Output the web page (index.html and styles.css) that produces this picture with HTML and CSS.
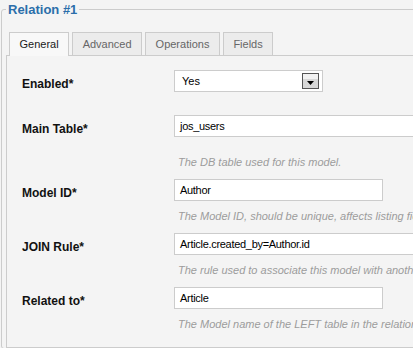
FILE: index.html
```html
<!DOCTYPE html>
<html>
<head>
<meta charset="utf-8">
<link rel="stylesheet" href="styles.css">
</head>
<body>
<fieldset class="relation">
  <legend class="relation-title">Relation #1</legend>
  <ul class="tabs">
    <li class="tab tab-active">General</li>
    <li class="tab">Advanced</li>
    <li class="tab">Operations</li>
    <li class="tab">Fields</li>
  </ul>
  <div class="panel">
    <div class="row row-first">
      <div class="label">Enabled*</div>
      <div class="field">
        <div class="select">
          <span class="select-value">Yes</span>
          <span class="select-btn">
            <svg width="7" height="4" viewBox="0 0 7 4"><path d="M0 0H7L3.5 4Z" fill="#000"/></svg>
          </span>
        </div>
      </div>
    </div>
    <div class="row row-main">
      <div class="label">Main Table*</div>
      <div class="field">
        <div class="input input-wide">jos_users</div>
        <div class="help help-main">The DB table used for this model.</div>
      </div>
    </div>
    <div class="row">
      <div class="label">Model ID*</div>
      <div class="field">
        <div class="input">Author</div>
        <div class="help">The Model ID, should be unique, affects listing fields and filters</div>
      </div>
    </div>
    <div class="row">
      <div class="label">JOIN Rule*</div>
      <div class="field">
        <div class="input input-wide">Article.created_by=Author.id</div>
        <div class="help">The rule used to associate this model with another one</div>
      </div>
    </div>
    <div class="row">
      <div class="label">Related to*</div>
      <div class="field">
        <div class="input">Article</div>
        <div class="help">The Model name of the LEFT table in the relation</div>
      </div>
    </div>
  </div>
</fieldset>
</body>
</html>
```
FILE: styles.css
```css
html, body {
  margin: 0;
  padding: 0;
  background: #f4f4f4;
  overflow: hidden;
  font-family: "Liberation Sans", Arial, sans-serif;
}

.relation {
  margin: 2px 0 0 1px;
  padding: 15px 0 0 4px;
  width: 640px;
  border: 1px solid #cccccc;
  border-radius: 3px;
  box-sizing: border-box;
}

.relation-title {
  padding: 0 2px;
  font-size: 13px;
  line-height: 15px;
  font-weight: bold;
  color: #2b6eaa;
}

.tabs {
  list-style: none;
  margin: 0 0 -1px 3px;
  padding: 0;
  display: flex;
  gap: 3px;
  position: relative;
  z-index: 1;
}

.tab {
  height: 22px;
  line-height: 22px;
  padding: 0 9.5px;
  border: 1px solid #cccccc;
  border-bottom: none;
  background: #ececec;
  color: #666666;
  font-size: 11px;
}

.tab-active {
  height: 23px;
  background: #f8f8f8;
  color: #1a1a1a;
}

.panel {
  border: 1px solid #cccccc;
  background: #f4f4f4;
  padding: 14px 0 16px 15px;
}

.row {
  display: flex;
  margin-top: 10px;
}

.row-first {
  margin-top: 0;
}

.row-main {
  margin-top: 23px;
}

.label {
  width: 152px;
  flex: none;
  padding-top: 7px;
  font-size: 12px;
  line-height: 14px;
  font-weight: bold;
  color: #111111;
}

.field {
  display: flex;
  flex-direction: column;
}

.select {
  width: 149px;
  height: 22px;
  box-sizing: border-box;
  border: 1px solid #cccccc;
  background: #ffffff;
  display: flex;
  align-items: center;
  justify-content: space-between;
  padding: 0 3px 0 7px;
}

.select-value {
  font-size: 11px;
  color: #000;
}

.select-btn {
  width: 17px;
  height: 16px;
  box-sizing: border-box;
  border: 1px solid #555555;
  background: linear-gradient(#f2f2f2 0, #f2f2f2 35%, #d8d8d8 35%, #d8d8d8 100%);
  display: flex;
  align-items: center;
  justify-content: center;
  padding-top: 3px;
}

.select-btn svg {
  display: block;
}

.input {
  width: 209px;
  height: 22px;
  box-sizing: border-box;
  border: 1px solid #cccccc;
  background: #ffffff;
  padding: 0 5px;
  font-size: 11px;
  letter-spacing: -0.3px;
  line-height: 20px;
  color: #000;
  white-space: nowrap;
}

.input-wide {
  width: 320px;
}

.help {
  margin: 9px 0 0 4px;
  font-size: 11px;
  line-height: 13px;
  font-style: italic;
  color: #9c9c9c;
  white-space: nowrap;
}

.help-main {
  margin-top: 19px;
}
```
